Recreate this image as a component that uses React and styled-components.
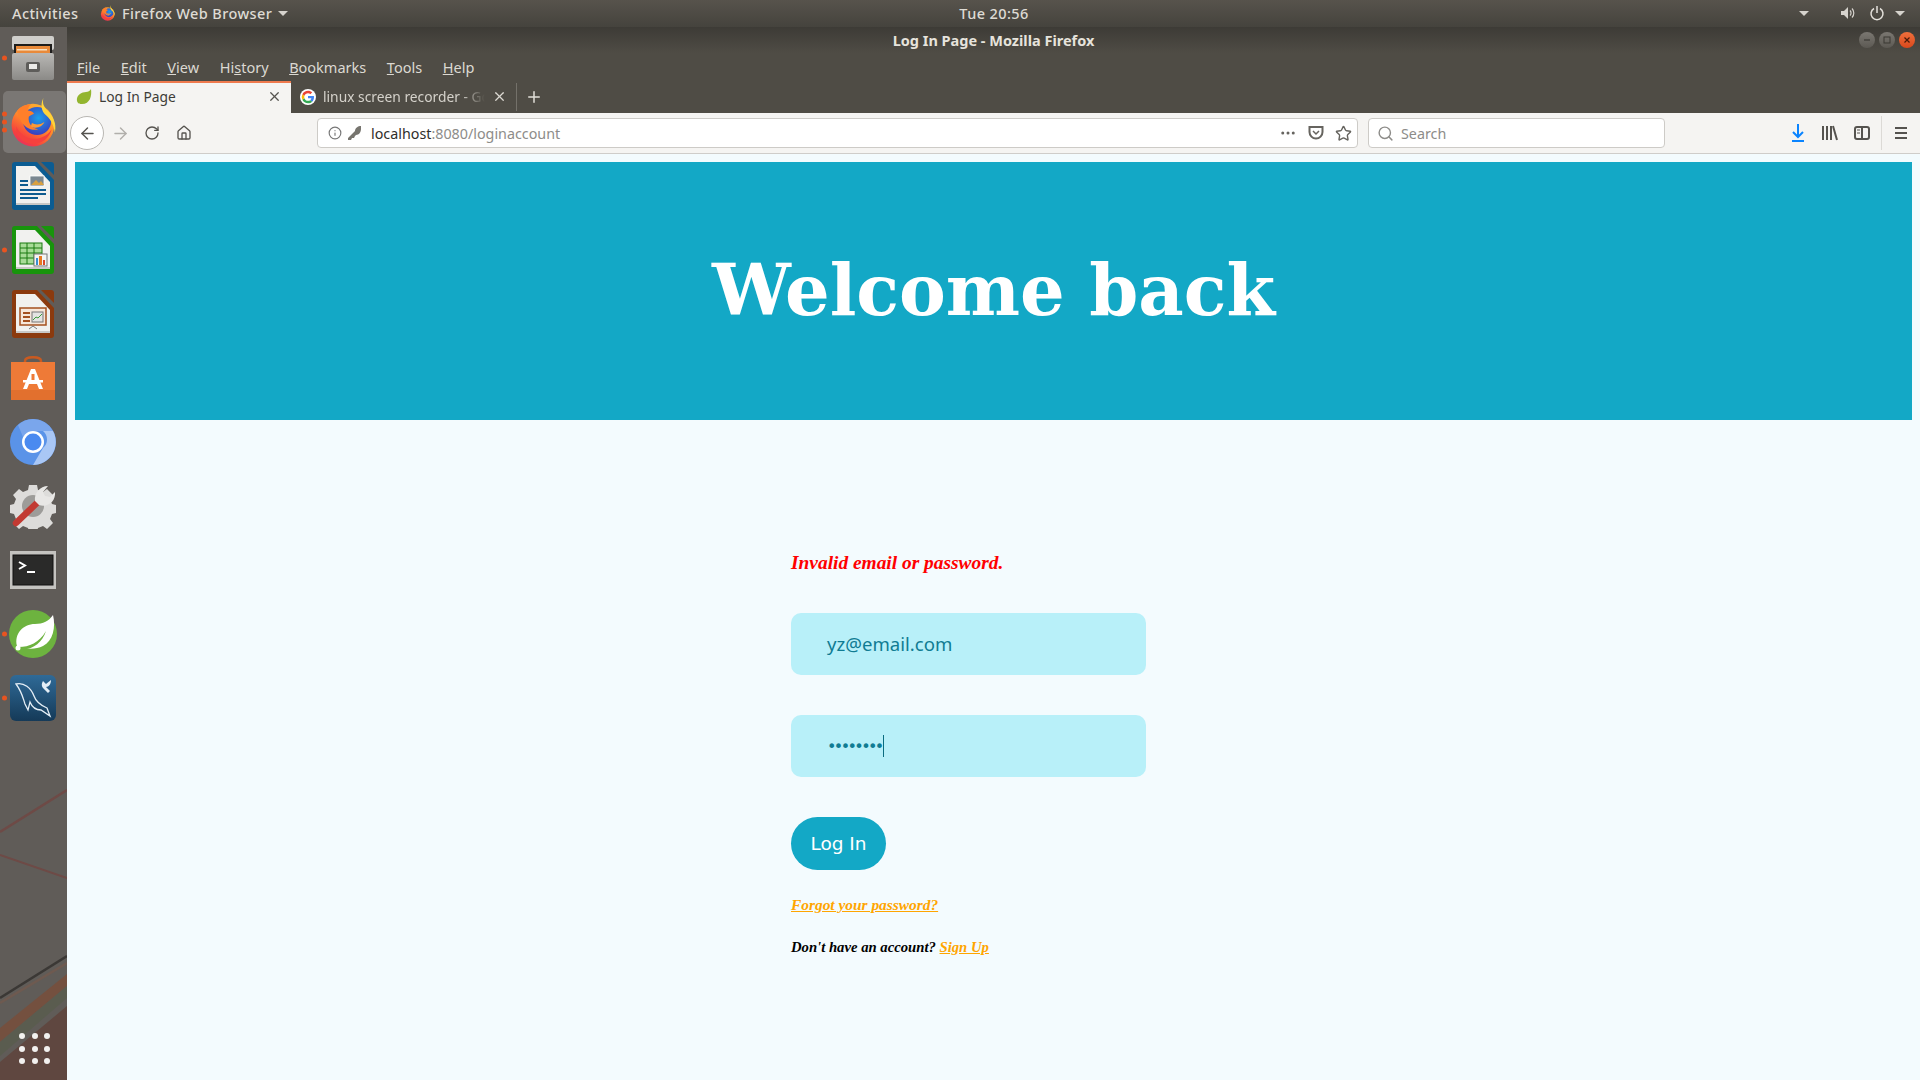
import React from "react";
import styled, { createGlobalStyle } from "styled-components";
import {
	ArrowLeft,
	ArrowRight,
	RotateCw,
	House,
	Info,
	Ellipsis,
	Star,
	Search,
	X,
	Plus,
} from "lucide-react";

const GlobalStyle = createGlobalStyle`
	html, body {
		margin: 0;
		padding: 0;
		height: 100%;
		overflow: hidden;
		background: #f3fbfe;
	}
	* {
		box-sizing: border-box;
	}
`;

const uiFont = `"Noto Sans", "Open Sans", sans-serif`;
const pageFont = `"DejaVu Serif", "Liberation Serif", serif`;

const Screen = styled.div`
	width: 1920px;
	height: 1080px;
	display: flex;
	flex-direction: column;
	overflow: hidden;
	font-family: ${uiFont};
`;

const TopBar = styled.div`
	height: 27px;
	flex: none;
	display: flex;
	align-items: center;
	padding: 0 15px 1px 12px;
	color: #dedbd4;
	font-size: 14.5px;
	font-weight: 500;
	letter-spacing: 0.4px;
	white-space: nowrap;
	background: linear-gradient(#57534c, #45433d);
	position: relative;
	z-index: 2;
`;

const Activities = styled.span`
	width: 88px;
	flex: none;
`;

const AppMenu = styled.div`
	display: flex;
	align-items: center;
	gap: 6px;
	width: 854px;
	flex: none;
`;

const Clock = styled.span`
	width: 80px;
	flex: none;
	text-align: center;
`;

const Tray = styled.div`
	margin-left: auto;
	display: flex;
	align-items: center;
	height: 100%;
`;

const Caret = styled.span`
	display: block;
	width: 0;
	height: 0;
	border-left: 5px solid transparent;
	border-right: 5px solid transparent;
	border-top: 5px solid #d6d3cd;
	margin-left: ${({ $left }) => $left || 0}px;
`;

const TrayIcon = styled.svg`
	display: block;
	margin-left: ${({ $left }) => $left || 0}px;
`;

const Body = styled.div`
	flex: 1;
	display: flex;
	min-height: 0;
`;

const Dock = styled.nav`
	width: 67px;
	flex: none;
	position: relative;
	display: flex;
	flex-direction: column;
	margin-top: -1px;
	background: #605c58;
	overflow: hidden;
`;

const Wallpaper = styled.svg`
	position: absolute;
	left: 0;
	top: 0;
	width: 67px;
	height: 1054px;
`;

const DockCell = styled.div`
	height: 64px;
	flex: none;
	display: flex;
	align-items: center;
	justify-content: center;
	position: relative;
	padding-right: 1px;
`;

const ActiveTile = styled.div`
	width: 64px;
	height: 62px;
	margin-left: 3px;
	border-radius: 5px;
	display: flex;
	align-items: center;
	justify-content: center;
	padding-right: 2px;
	background: rgba(255, 255, 255, 0.17);
`;

const Pips = styled.div`
	position: absolute;
	left: 2px;
	top: 50%;
	transform: translateY(-50%);
	display: flex;
	flex-direction: column;
	gap: 3px;
`;

const Pip = styled.span`
	display: block;
	width: 5px;
	height: 5px;
	border-radius: 50%;
	background: #e95420;
`;

const AppGrid = styled.div`
	position: absolute;
	left: 19px;
	bottom: 16px;
	display: grid;
	grid-template-columns: repeat(3, 6px);
	gap: 6.5px;
`;

const AppDot = styled.span`
	width: 6px;
	height: 6px;
	border-radius: 50%;
	background: #f2f1ef;
`;

const Browser = styled.div`
	flex: 1;
	min-width: 0;
	display: flex;
	flex-direction: column;
`;

const TitleBar = styled.div`
	height: 26px;
	flex: none;
	position: relative;
	display: flex;
	align-items: center;
	justify-content: center;
	color: #e6e3dc;
	font-size: 14.5px;
	font-weight: 700;
	background: linear-gradient(#3d3b36, #4f4c45);
`;

const WindowButtons = styled.div`
	position: absolute;
	right: 5px;
	top: 5px;
	display: flex;
	gap: 4px;
`;

const WindowButton = styled.span`
	width: 16px;
	height: 16px;
	border-radius: 50%;
	display: flex;
	align-items: center;
	justify-content: center;
	background: ${({ $close }) =>
		$close ? "linear-gradient(#f0703c, #d9481c)" : "linear-gradient(#7a7771, #5c5953)"};
`;

const MenuBar = styled.div`
	height: 28px;
	flex: none;
	display: flex;
	align-items: center;
	padding-left: 10px;
	gap: 20.6px;
	color: #dcd9d2;
	font-size: 14.5px;
	background: #4f4c45;
`;

const Mnemonic = styled.span`
	text-decoration: underline;
`;

const TabStrip = styled.div`
	height: 32px;
	flex: none;
	display: flex;
	align-items: stretch;
	background: #4f4c45;
`;

const Tab = styled.div`
	width: ${({ $active }) => ($active ? 224 : 225)}px;
	display: flex;
	align-items: center;
	padding: 0 9px 1px;
	gap: 7px;
	font-size: 13.8px;
	color: ${({ $active }) => ($active ? "#3d3c38" : "#d5d2cb")};
	background: ${({ $active }) => ($active ? "#f5f4f2" : "transparent")};
	box-shadow: ${({ $active }) => ($active ? "inset 0 2px 0 #ef7a4e" : "none")};
`;

const TabLabel = styled.span`
	flex: 1;
	min-width: 0;
	overflow: hidden;
	white-space: nowrap;
	-webkit-mask-image: ${({ $fade }) =>
		$fade ? "linear-gradient(to right, #000 85%, transparent)" : "none"};
`;

const TabDivider = styled.span`
	width: 1px;
	height: 28px;
	align-self: center;
	background: #74716a;
`;

const NewTab = styled.div`
	width: 34px;
	display: flex;
	align-items: center;
	justify-content: center;
	color: #e2dfd9;
`;

const NavBar = styled.div`
	height: 41px;
	flex: none;
	display: flex;
	align-items: center;
	padding-left: 3px;
	background: #f5f4f2;
	border-bottom: 1px solid #cfcdca;
	color: #55534f;
`;

const BackButton = styled.div`
	width: 34px;
	height: 34px;
	flex: none;
	border-radius: 50%;
	border: 1px solid #b9b7b3;
	background: #fff;
	display: flex;
	align-items: center;
	justify-content: center;
`;

const NavButton = styled.div`
	width: 32px;
	flex: none;
	display: flex;
	align-items: center;
	justify-content: center;
	color: ${({ $muted }) => ($muted ? "#b1afab" : "#55534f")};
`;

const UrlBar = styled.div`
	width: 1041px;
	height: 30px;
	flex: none;
	margin-left: 117px;
	padding: 0 5px 0 10px;
	display: flex;
	align-items: center;
	background: #fff;
	border: 1px solid #cdcbc7;
	border-radius: 4px;
	font-size: 14.3px;
	color: #8d8c89;
`;

const UrlHost = styled.span`
	color: #2f2e2b;
`;

const UrlText = styled.span`
	flex: 1;
	margin-left: 9px;
`;

const UrlIcon = styled.svg`
	display: block;
	margin-left: ${({ $left }) => $left}px;
`;

const SearchBox = styled.div`
	width: 297px;
	height: 30px;
	flex: none;
	margin-left: 10px;
	padding-left: 8px;
	display: flex;
	align-items: center;
	gap: 7px;
	background: #fff;
	border: 1px solid #cdcbc7;
	border-radius: 4px;
	font-size: 14.3px;
	color: #8d8c89;
`;

const ToolGroup = styled.div`
	flex: 1;
	display: flex;
	align-items: center;
	padding-left: 117px;
`;

const ToolSlot = styled.div`
	width: 32px;
	flex: none;
	display: flex;
	justify-content: center;
`;

const ToolDivider = styled.span`
	width: 1px;
	height: 34px;
	margin: 0 3px;
	background: #dcdad6;
`;

const Page = styled.main`
	flex: 1;
	min-height: 0;
	background: #f3fbfe;
	padding: 8px 8px 0;
`;

const Hero = styled.header`
	height: 258px;
	padding-bottom: 2px;
	display: flex;
	align-items: center;
	justify-content: center;
	background: #13a8c6;
`;

const HeroTitle = styled.h1`
	margin: 0;
	font-family: ${pageFont};
	font-weight: 700;
	font-size: 70.2px;
	color: #fff;
`;

const Form = styled.form`
	width: 355px;
	margin: 131px 0 0 716px;
	display: flex;
	flex-direction: column;
`;

const ErrorText = styled.p`
	margin: 0 0 39px;
	height: 23px;
	line-height: 23px;
	font-family: "Liberation Serif", serif;
	font-style: italic;
	font-weight: 700;
	font-size: 19.4px;
	color: #ff0000;
`;

const Field = styled.div`
	height: 62px;
	margin-bottom: 40px;
	padding: 0 0 ${({ $lift }) => $lift || 0}px 36px;
	display: flex;
	align-items: center;
	border-radius: 10px;
	background: #b8f0f9;
	color: #107c93;
	font-size: 18.6px;
`;

const PasswordDots = styled.span`
	font-family: "DejaVu Sans", sans-serif;
	font-size: 16px;
	letter-spacing: -2.6px;
	margin-right: 1px;
`;

const TextCursor = styled.span`
	display: block;
	width: 1px;
	height: 22px;
	background: #0b6c80;
`;

const SubmitButton = styled.button`
	width: 95px;
	height: 53px;
	padding: 0;
	border: none;
	border-radius: 27px;
	background: #13a8c6;
	color: #fff;
	font-family: "DejaVu Sans", sans-serif;
	font-size: 18.5px;
`;

const SmallLine = styled.p`
	margin: ${({ $top }) => $top}px 0 0;
	height: 18px;
	line-height: 18px;
	font-family: "Liberation Serif", serif;
	font-style: italic;
	font-weight: 700;
	font-size: ${({ $size }) => $size}px;
	color: #000;
`;

const OrangeLink = styled.a`
	color: #ffa500;
	text-decoration: underline;
`;

const FirefoxLogo = ({ size = 50, id = "ff" }) => (
	<svg width={size} height={size} viewBox="0 0 48 48">
		<defs>
			<linearGradient id={`${id}Outer`} x1="0.8" y1="0" x2="0.2" y2="1">
				<stop offset="0" stopColor="#ffb52e" />
				<stop offset="0.45" stopColor="#ff8a2a" />
				<stop offset="0.8" stopColor="#f5413e" />
				<stop offset="1" stopColor="#e42b6a" />
			</linearGradient>
			<radialGradient id={`${id}Globe`} cx="0.55" cy="0.4" r="0.6">
				<stop offset="0" stopColor="#1aa0ea" />
				<stop offset="1" stopColor="#3a3fc0" />
			</radialGradient>
		</defs>
		<circle cx="23" cy="27" r="20.500" fill={`url(#${id}Outer)`} />
		<circle cx="27" cy="23" r="13.500" fill={`url(#${id}Globe)`} />
		<path d="M33 1c-1 5 0 8 4 12 5 5 9 12 7 21-1-8-5-14-10-18-4-5-3-11-1-15z" fill="#ffd43a" />
		<path d="M8 13c3-4 8-6 13-6-2 2-3 4-3 6 2 0 5 1 6 3-2 1-4 2-5 3-1 6 3 11 9 12-6 2-14-2-17-9-2-3-3-6-3-9z" fill="#ff7f2a" />
		<path d="M22 25c3 2 8 2 12-1-2 5-9 7-13 4z" fill="#ff9a32" />
		<path d="M7 28c3 8 11 13 20 12 6-1 11-4 14-9-2 8-9 14-18 14-10 0-17-8-16-17z" fill="#f5413e" />
	</svg>
);

const CabinetIcon = () => (
	<svg width="44" height="44" viewBox="0 0 44 44">
		<defs>
			<linearGradient id="cabFront" x1="0" y1="0" x2="0" y2="1">
				<stop offset="0" stopColor="#b9b8b5" />
				<stop offset="1" stopColor="#8b8a87" />
			</linearGradient>
		</defs>
		<rect x="1" y="0" width="42" height="14" rx="2" fill="#cfcecb" />
		<rect x="3" y="8" width="38" height="12" fill="#1e1d1c" />
		<rect x="5" y="10" width="34" height="7" fill="#e98a3a" />
		<rect x="6" y="13" width="30" height="1.500" fill="#f7e2c4" />
		<rect x="1" y="17" width="42" height="27" rx="2" fill="url(#cabFront)" />
		<rect x="15" y="26" width="14" height="10" rx="2" fill="#5e5d5a" />
		<rect x="18" y="28" width="8" height="5" fill="#ecebe8" />
	</svg>
);

const OfficeDoc = ({ color, children }) => (
	<svg width="42" height="48" viewBox="0 0 42 48">
		<path d="M3 0h22l17 18v27a3 3 0 0 1-3 3H3a3 3 0 0 1-3-3V3a3 3 0 0 1 3-3z" fill={color} />
		<path d="M29 0h10a3 3 0 0 1 3 3v10z" fill={color} />
		<path d="M4 4h19l15 16v23H4z" fill="#f1f1ef" />
		<path d="M4 41h34v2H4z" fill="#c8c8c6" />
		{children}
	</svg>
);

const WriterIcon = () => (
	<OfficeDoc color="#0b5c92">
		<path d="M8 18h8v2H8zM8 22h8v2H8zM8 27h26v2H8zM8 31h26v2H8zM8 35h18v2H8z" fill="#0d5b8f" />
		<rect x="18" y="14" width="14" height="10" fill="#7a8790" stroke="#fff" strokeWidth="0.800" />
		<path d="M19 23l5-5 3 3 2-2 3 4z" fill="#d9a040" />
	</OfficeDoc>
);

const CalcIcon = () => (
	<OfficeDoc color="#18940c">
		<rect x="8" y="17" width="22" height="21" fill="#a8dc98" stroke="#1b7a10" strokeWidth="1" />
		<path d="M8 22h22M8 27h22M8 32h22M15 17v21M22 17v21" stroke="#1b7a10" strokeWidth="1" />
		<rect x="22" y="28" width="13" height="12" fill="#f4f4f2" stroke="#777" strokeWidth="1" />
		<path d="M24 32h2v7h-2z" fill="#3b8ed0" />
		<path d="M27 30h3v9h-3z" fill="#e8791f" />
		<path d="M31 34h2v5h-2z" fill="#d94a2a" />
	</OfficeDoc>
);

const ImpressIcon = () => (
	<OfficeDoc color="#8b3a0e">
		<rect x="8" y="18" width="26" height="17" fill="#f6e7da" stroke="#a4501f" strokeWidth="1.500" />
		<path d="M11 22h7v2h-7zM11 26h7v2h-7zM11 30h7v2h-7z" fill="#a4501f" />
		<rect x="20" y="22" width="11" height="10" fill="#e4e4e2" stroke="#777" strokeWidth="1" />
		<path d="M21 30l3-3 2 1 4-4" stroke="#3b9a3a" strokeWidth="1" fill="none" />
		<path d="M21 36l-4 3M21 36l4 3" stroke="#777" strokeWidth="1" />
	</OfficeDoc>
);

const StoreIcon = () => (
	<svg width="44" height="44" viewBox="0 0 44 44">
		<path d="M14 10V5c0-5 16-5 16 0v5" fill="none" stroke="#c95a20" strokeWidth="2.500" />
		<rect y="6" width="44" height="38" fill="#ee7a37" />
		<rect y="34" width="44" height="10" fill="#e2702e" />
		<path d="M20 13h4l8 20h-4l-2-5h-8l-2 5h-4z" fill="#fff" />
		<rect x="12" y="24" width="20" height="2.500" fill="#fff" />
		<rect x="20.500" y="18" width="3" height="6" fill="#ee7a37" />
	</svg>
);

const ChromiumIcon = () => (
	<svg width="46" height="46" viewBox="0 0 46 46">
		<circle cx="23" cy="23" r="23" fill="#5a93e8" />
		<path d="M23 0a23 23 0 0 1 20 12H23a11 11 0 0 0-10 6L8 6a23 23 0 0 1 15-6z" fill="#7aa6ec" />
		<path d="M43 12a23 23 0 0 1-20 34l10-17a11 11 0 0 0 0-17z" fill="#a9c7f5" />
		<circle cx="23" cy="23" r="11" fill="#fff" />
		<circle cx="23" cy="23" r="8.500" fill="#4a8af0" />
	</svg>
);

const ToolsIcon = () => (
	<svg width="46" height="46" viewBox="0 0 46 46">
		<path d="M19 2h8l1 5 5 2 4-3 6 6-3 4 2 5 4 1v8l-4 1-2 5 3 4-6 6-4-3-5 2-1 4h-8l-1-4-5-2-4 3-6-6 3-4-2-5-4-1v-8l4-1 2-5-3-4 6-6 4 3 5-2z" fill="#dddcda" />
		<circle cx="23" cy="23" r="11" fill="#9d9c99" />
		<path d="M6 40L29 18" stroke="#c23a32" strokeWidth="6.500" strokeLinecap="round" />
		<path d="M25 18c-1-8 5-15 13-15l-5 6 2 4 5 1 5-5c1 9-7 16-16 13z" fill="#e8e7e5" />
	</svg>
);

const TerminalIcon = () => (
	<svg width="46" height="38" viewBox="0 0 46 38">
		<rect width="46" height="38" fill="#c4c3c0" />
		<rect x="3" y="4" width="40" height="30" fill="#2a2a29" stroke="#111" strokeWidth="1" />
		<path d="M9 11l6 3.500-6 3.500" fill="none" stroke="#fff" strokeWidth="2" />
		<rect x="17" y="20" width="8" height="2" fill="#fff" />
	</svg>
);

const SpringIcon = () => (
	<svg width="48" height="48" viewBox="0 0 48 48">
		<circle cx="24" cy="24" r="24" fill="#6db33f" />
		<path d="M8 36c-3-12 6-22 18-22 8 0 14-3 18-9 3 12 0 26-10 31-8 4-18 3-26 0z" fill="#fff" />
		<path d="M10 37c10 0 20-4 27-16-4 12-14 20-27 18z" fill="#6db33f" />
		<circle cx="9" cy="38" r="2.500" fill="#fff" />
	</svg>
);

const WorkbenchIcon = () => (
	<svg width="46" height="46" viewBox="0 0 46 46">
		<defs>
			<linearGradient id="wbBack" x1="0" y1="0" x2="0" y2="1">
				<stop offset="0" stopColor="#2f6a97" />
				<stop offset="1" stopColor="#153a58" />
			</linearGradient>
		</defs>
		<rect width="46" height="46" rx="6" fill="url(#wbBack)" />
		<path d="M6 9c8-2 15 4 18 12 2 6 6 9 13 12l3 8-9-6c-5 0-9-3-11-8l-2 8-3-6c-2-6-3-12-9-20z" fill="none" stroke="#e4eef6" strokeWidth="1.300" />
		<path d="M33 6l3 3 5-4c0 4-2 7-5 7l4 4-2 2-5-5c-2-3-1-5 0-7z" fill="#e4eef6" />
	</svg>
);

const SpringLeaf = () => (
	<svg width="16" height="16" viewBox="0 0 16 16">
		<path d="M1 12C0 6 6 3 10 3c2 0 4-1 5-3 1 7-1 15-9 15-2 0-4 0-5-3z" fill="#93b52f" />
	</svg>
);

const GoogleG = () => (
	<svg width="16" height="16" viewBox="0 0 48 48">
		<circle cx="24" cy="24" r="24" fill="#fff" />
		<path d="M42 24.500c0-1.300-.1-2.500-.4-3.500H24v7h10.200a9 9 0 0 1-3.700 5.800l6 4.600C40 35 42 30 42 24.500z" fill="#4285f4" />
		<path d="M24 43c5 0 9.300-1.700 12.500-4.600l-6-4.600c-1.700 1.100-3.900 1.800-6.500 1.800-5 0-9.200-3.300-10.700-7.900l-6.200 4.800C10.200 38.700 16.600 43 24 43z" fill="#34a853" />
		<path d="M13.300 27.700a11.400 11.400 0 0 1 0-7.400l-6.200-4.800a19 19 0 0 0 0 17z" fill="#fbbc05" />
		<path d="M24 12.700c2.800 0 5.300 1 7.300 2.800l5.400-5.400C33.300 7 29 5 24 5 16.600 5 10.200 9.300 7.100 15.500l6.200 4.800c1.500-4.300 5.700-7.600 10.700-7.600z" fill="#ea4335" />
	</svg>
);

const dockApps = [
	{ key: "files", icon: <CabinetIcon />, pips: 1 },
	{ key: "firefox", icon: <FirefoxLogo />, pips: 3, active: true },
	{ key: "writer", icon: <WriterIcon />, pips: 0 },
	{ key: "calc", icon: <CalcIcon />, pips: 1 },
	{ key: "impress", icon: <ImpressIcon />, pips: 0 },
	{ key: "store", icon: <StoreIcon />, pips: 0 },
	{ key: "chromium", icon: <ChromiumIcon />, pips: 0 },
	{ key: "tools", icon: <ToolsIcon />, pips: 0 },
	{ key: "terminal", icon: <TerminalIcon />, pips: 0 },
	{ key: "spring", icon: <SpringIcon />, pips: 1 },
	{ key: "workbench", icon: <WorkbenchIcon />, pips: 1 },
];

const menus = [
	["", "F", "ile"],
	["", "E", "dit"],
	["", "V", "iew"],
	["Hi", "s", "tory"],
	["", "B", "ookmarks"],
	["", "T", "ools"],
	["", "H", "elp"],
];

const App = () => (
	<Screen>
		<GlobalStyle />
		<TopBar>
			<Activities>Activities</Activities>
			<AppMenu>
				<FirefoxLogo size={16} id="ffSmall" />
				<span>Firefox Web Browser</span>
				<Caret />
			</AppMenu>
			<Clock>Tue 20:56</Clock>
			<Tray>
				<Caret />
				<TrayIcon $left={31} width="16" height="16" viewBox="0 0 16 16" fill="none" stroke="#d6d3cd">
					<path d="M1 6h3l4-4v12l-4-4H1z" fill="#d6d3cd" stroke="none" />
					<path d="M10 5.500a3.500 3.500 0 0 1 0 5M12 3.500a6.500 6.500 0 0 1 0 9" strokeWidth="1.200" />
				</TrayIcon>
				<TrayIcon $left={13} width="16" height="16" viewBox="0 0 16 16" fill="none" stroke="#e4e1db" strokeWidth="1.500">
					<path d="M8 1v7M5 3.500a6 6 0 1 0 6 0" />
				</TrayIcon>
				<Caret $left={10} />
			</Tray>
		</TopBar>
		<Body>
			<Dock>
				<Wallpaper viewBox="0 0 67 1054">
					<path d="M0 806L67 764" stroke="#6e4a46" strokeWidth="2.500" />
					<path d="M0 829L67 852" stroke="#6e4a46" strokeWidth="2" />
					<path d="M0 972L67 930" stroke="#3b3835" strokeWidth="2.500" />
					<path d="M0 977L67 937" stroke="#6e5a50" strokeWidth="2.500" />
					<path d="M0 1002L67 948L67 960L0 1016z" fill="#74503f" />
					<path d="M0 1016L67 960L67 972L0 1030z" fill="#5a5c4f" />
					<path d="M0 1036L67 980V1054H0z" fill="#5f4740" />
				</Wallpaper>
				{dockApps.map((app) => (
					<DockCell key={app.key}>
						{app.active ? <ActiveTile>{app.icon}</ActiveTile> : app.icon}
						{app.pips > 0 && (
							<Pips>
								{Array.from({ length: app.pips }, (_, i) => (
									<Pip key={i} />
								))}
							</Pips>
						)}
					</DockCell>
				))}
				<AppGrid>
					{Array.from({ length: 9 }, (_, i) => (
						<AppDot key={i} />
					))}
				</AppGrid>
			</Dock>
			<Browser>
				<TitleBar>
					Log In Page - Mozilla Firefox
					<WindowButtons>
						<WindowButton>
							<svg width="8" height="8" viewBox="0 0 8 8">
								<path d="M1 4h6" stroke="#3a3833" strokeWidth="1.200" />
							</svg>
						</WindowButton>
						<WindowButton>
							<svg width="8" height="8" viewBox="0 0 8 8">
								<rect x="1" y="1" width="6" height="6" fill="none" stroke="#3a3833" />
							</svg>
						</WindowButton>
						<WindowButton $close>
							<svg width="8" height="8" viewBox="0 0 8 8">
								<path d="M1.500 1.500l5 5M6.500 1.500l-5 5" stroke="#4a1a08" strokeWidth="1.200" />
							</svg>
						</WindowButton>
					</WindowButtons>
				</TitleBar>
				<MenuBar>
					{menus.map(([before, key, after]) => (
						<span key={key + after}>
							{before}
							<Mnemonic>{key}</Mnemonic>
							{after}
						</span>
					))}
				</MenuBar>
				<TabStrip>
					<Tab $active>
						<SpringLeaf />
						<TabLabel>Log In Page</TabLabel>
						<X size={15} color="#55534f" />
					</Tab>
					<Tab>
						<GoogleG />
						<TabLabel $fade>linux screen recorder - Google Search</TabLabel>
						<X size={15} color="#dcd9d2" />
					</Tab>
					<TabDivider />
					<NewTab>
						<Plus size={18} />
					</NewTab>
				</TabStrip>
				<NavBar>
					<BackButton>
						<ArrowLeft size={19} strokeWidth={1.800} />
					</BackButton>
					<NavButton $muted>
						<ArrowRight size={19} strokeWidth={1.800} />
					</NavButton>
					<NavButton>
						<RotateCw size={16} strokeWidth={2} />
					</NavButton>
					<NavButton>
						<House size={16} strokeWidth={2} />
					</NavButton>
					<UrlBar>
						<Info size={14} color="#777" />
						<UrlIcon $left={4} width="16" height="16" viewBox="0 0 16 16">
							<path d="M15 1c-3 0-6 2-6 5l-7 7v2h3l1-2h2l1-2 1-1c3 0 5-3 5-6z" fill="#77756f" />
						</UrlIcon>
						<UrlText>
							<UrlHost>localhost</UrlHost>:8080/loginaccount
						</UrlText>
						<Ellipsis size={18} color="#66645f" />
						<UrlIcon $left={11} width="16" height="16" viewBox="0 0 16 16" fill="none" stroke="#66645f">
							<path d="M1.500 2h13v5a6.500 6.500 0 0 1-13 0z" strokeWidth="2" />
							<path d="M5 6l3 3 3-3" strokeWidth="1.500" />
						</UrlIcon>
						<UrlIcon as={Star} $left={11} size={17} color="#66645f" strokeWidth={2} />
					</UrlBar>
					<SearchBox>
						<Search size={17} color="#8d8c89" />
						Search
					</SearchBox>
					<ToolGroup>
						<ToolSlot>
							<svg width="14" height="18" viewBox="0 0 14 18" fill="none" stroke="#0a84ff" strokeWidth="2">
								<path d="M7 0v13M2 8l5 5 5-5M1 17h12" />
							</svg>
						</ToolSlot>
						<ToolSlot>
							<svg width="16" height="16" viewBox="0 0 16 16" fill="none" stroke="#55534f" strokeWidth="2">
								<path d="M1 1v14M5 1v14M9 1v14M11 1l4 14" />
							</svg>
						</ToolSlot>
						<ToolSlot>
							<svg width="16" height="16" viewBox="0 0 16 16" fill="none" stroke="#55534f" strokeWidth="2">
								<rect x="1" y="2" width="14" height="12" rx="2" />
								<path d="M8 2v12" />
								<path d="M3 5h3M3 8h3" strokeWidth="1" />
							</svg>
						</ToolSlot>
						<ToolDivider />
						<ToolSlot>
							<svg width="14" height="14" viewBox="0 0 14 14" stroke="#55534f" strokeWidth="2">
								<path d="M1 2h12M1 7h12M1 12h12" />
							</svg>
						</ToolSlot>
					</ToolGroup>
				</NavBar>
				<Page>
					<Hero>
						<HeroTitle>Welcome back</HeroTitle>
					</Hero>
					<Form>
						<ErrorText>Invalid email or password.</ErrorText>
						<Field $lift={2}>yz@email.com</Field>
						<Field>
							<PasswordDots>••••••••</PasswordDots>
							<TextCursor />
						</Field>
						<SubmitButton type="button">Log In</SubmitButton>
						<SmallLine $top={26} $size={15.4}>
							<OrangeLink>Forgot your password?</OrangeLink>
						</SmallLine>
						<SmallLine $top={24} $size={14.7}>
							Don't have an account? <OrangeLink>Sign Up</OrangeLink>
						</SmallLine>
					</Form>
				</Page>
			</Browser>
		</Body>
	</Screen>
);

export default App;
